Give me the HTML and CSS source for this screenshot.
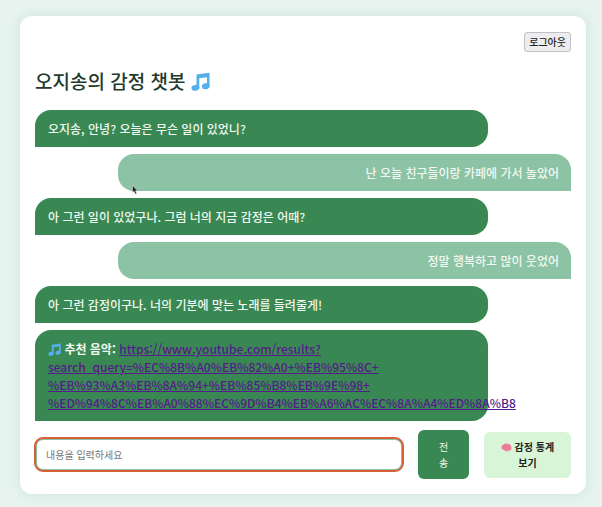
FILE: index.html
```html
<!DOCTYPE html>
<html lang="ko">
<head>
<meta charset="utf-8">
<meta name="viewport" content="width=device-width, initial-scale=1">
<title>오지송의 감정 챗봇</title>
<link rel="stylesheet" href="styles.css">
</head>
<body>
<svg class="sprite" aria-hidden="true">
  <symbol id="note" viewBox="0 0 20 20">
    <path fill="currentColor" d="M5.800 2.500 19.500.7V15H16.800V5.500L8.700 6.600V17H5.800Z"/>
    <ellipse fill="currentColor" cx="4.600" cy="16.600" rx="4.200" ry="3.100" transform="rotate(-12 4.600 16.600)"/>
    <ellipse fill="currentColor" cx="15.500" cy="15" rx="4.100" ry="3.100" transform="rotate(-12 15.500 15)"/>
  </symbol>
</svg>
<main class="card">
  <header class="top"><button class="logout" type="button">로그아웃</button></header>
  <h1 class="title">오지송의 감정 챗봇 <svg class="note" aria-hidden="true"><use href="#note"/></svg></h1>
  <section class="chat">
    <p class="message bot">오지송, 안녕? 오늘은 무슨 일이 있었니?</p>
    <p class="message user">난 오늘 친구들이랑 카페에 가서 놀았어</p>
    <p class="message bot">아 그런 일이 있었구나. 그럼 너의 지금 감정은 어때?</p>
    <p class="message user">정말 행복하고 많이 웃었어</p>
    <p class="message bot">아 그런 감정이구나. 너의 기분에 맞는 노래를 들려줄게!</p>
    <p class="message bot"><svg class="note note-inline" aria-hidden="true"><use href="#note"/></svg> <strong>추천 음악:</strong> <a href="https://www.youtube.com/results?search_query=%EC%8B%A0%EB%82%A0+%EB%95%8C+%EB%93%A3%EB%8A%94+%EB%85%B8%EB%9E%98+%ED%94%8C%EB%A0%88%EC%9D%B4%EB%A6%AC%EC%8A%A4%ED%8A%B8">https://www.youtube.com/results?<wbr>search_query=%EC%8B%A0%EB%82%A0+%EB%95%8C+<wbr>%EB%93%A3%EB%8A%94+%EB%85%B8%EB%9E%98+<wbr>%ED%94%8C%EB%A0%88%EC%9D%B4%EB%A6%AC%EC%8A%A4%ED%8A%B8</a></p>
  </section>
  <form class="composer">
    <input class="entry" type="text" aria-label="내용" placeholder="내용을 입력하세요">
    <button class="send" type="button">전송</button>
    <button class="stats" type="button"><svg class="brain" viewBox="0 0 20 16" aria-hidden="true"><path fill="#f0809c" d="M1 9C0 6 2 3 5 2.500 7 .3 10 .3 12 1.500c3-.5 5 1 5.500 3.500 2 1.500 2.500 4 1 6 0 2-2 3-4 2.500-1 2-3 2.500-4.500 1-2 .5-4-.5-4-2C3 12.500 1 11 1 9Z"/><path fill="none" stroke="#dc6482" d="M3 8c2-2 3 1 5-1M7 3c0 2 3 1 3 4s3 1 5 3M12 3c0 3 3 1 4 4M6 12c1-2 3-1 4 0"/></svg> 감정 통계 보기</button>
  </form>
</main>
<svg class="cursor" viewBox="0 0 6 10" aria-hidden="true"><path fill="#222" stroke="#ddd" stroke-width=".5" d="M.5.5v7l1.500-1.300L3.300 9l1.300-.6L3.500 5.800h2Z"/></svg>
</body>
</html>
```

FILE: styles.css
```css
* {
  box-sizing: border-box;
}

body {
  margin: 0;
  padding: 16px 16px 13px 20px;
  background: #e6f3ee;
  color: #1f3b2d;
  font-family: "Noto Sans CJK KR", sans-serif;
  font-size: 12px;
  line-height: 18px;
}

.sprite {
  position: absolute;
  width: 0;
  height: 0;
}

.card {
  padding: 16px 15px 15px;
  border-radius: 12px;
  background: #fff;
  box-shadow: 0 0 12px rgba(40, 100, 70, 0.1);
}

.top {
  display: flex;
  justify-content: flex-end;
}

button,
input {
  font-family: inherit;
}

.logout {
  height: 20px;
  padding: 0 4px;
  border: 1px solid #c0c0c6;
  border-radius: 3px;
  background: #ededf0;
  color: #222;
  font-size: 10px;
  font-weight: 500;
  line-height: 18px;
}

.title {
  margin: 16px 0;
  font-size: 19px;
  font-weight: 500;
  line-height: 26px;
}

.note {
  width: 19px;
  height: 19px;
  color: #55afea;
  vertical-align: -2px;
}

.note-inline {
  width: 13px;
  height: 13px;
}

.chat {
  display: flex;
  flex-direction: column;
  gap: 7px;
}

.message {
  margin: 0;
  padding: 10px 12px 9px;
  color: #f2f8f2;
  font-weight: 500;
}

.bot {
  margin-right: 83px;
  padding-left: 13px;
  border-radius: 16px 16px 16px 0;
  background: #398853;
}

.user {
  margin-left: 83px;
  border-radius: 16px 16px 0 16px;
  background: #8bc3a4;
  text-align: right;
}

.message strong {
  font-weight: 700;
}

.message a {
  color: #551a8b;
}

.composer {
  display: flex;
  align-items: center;
  gap: 15px;
  margin-top: 9px;
}

.entry {
  flex: 1;
  min-width: 0;
  height: 33px;
  padding: 0 9px;
  border: 2px solid #8bc3a4;
  border-radius: 8px;
  outline: 2px solid #d95f36;
  outline-offset: -1px;
  background: #fff;
  font-size: 10px;
}

.entry::placeholder {
  color: #757575;
}

.send,
.stats {
  border: 0;
  border-radius: 6px;
  font-size: 10px;
  line-height: 16px;
}

.send {
  width: 51px;
  height: 49px;
  padding: 0 20px;
  background: #398853;
  color: #f2f8f2;
}

.stats {
  width: 87px;
  height: 46px;
  padding: 0 12px;
  background: #d8f5d8;
  color: #222;
  font-weight: 700;
  word-break: keep-all;
}

.brain {
  width: 11px;
  height: 9px;
  vertical-align: -1px;
}

.cursor {
  position: absolute;
  top: 185px;
  left: 132px;
  width: 6px;
  height: 10px;
}
```
